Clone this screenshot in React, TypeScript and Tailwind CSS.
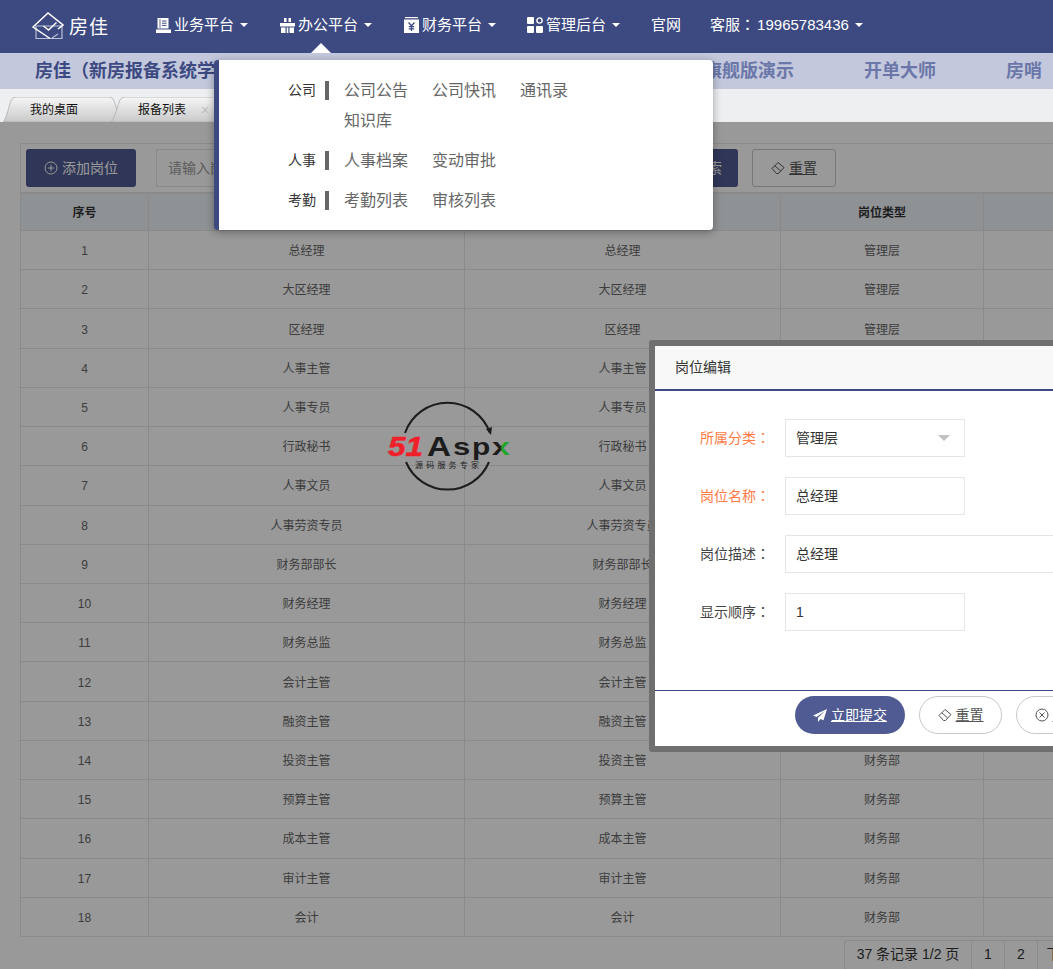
import type { ReactNode } from "react";

const positions = [
  ["总经理", "管理层"], ["大区经理", "管理层"], ["区经理", "管理层"], ["人事主管", "人事部"],
  ["人事专员", "人事部"], ["行政秘书", "人事部"], ["人事文员", "人事部"], ["人事劳资专员", "人事部"],
  ["财务部部长", "财务部"], ["财务经理", "财务部"], ["财务总监", "财务部"], ["会计主管", "财务部"],
  ["融资主管", "财务部"], ["投资主管", "财务部"], ["预算主管", "财务部"], ["成本主管", "财务部"],
  ["审计主管", "财务部"], ["会计", "财务部"],
];

const FONT = "font-['Liberation_Sans','Noto_Sans_CJK_SC',sans-serif]";

function Caret() {
  return <span className="ml-[6px] h-0 w-0 border-x-[4px] border-t-[4px] border-x-transparent border-t-white" />;
}

function NavItem({ icon, label }: { icon: ReactNode; label: string }) {
  return (
    <div className="flex items-center">
      <span className="mr-[3px] flex h-4 w-4 items-center justify-center">{icon}</span>
      <span>{label}</span>
      <Caret />
    </div>
  );
}

function BookIcon() {
  return (
    <svg width="15" height="15" viewBox="0 0 15 15">
      <path d="M1.5 0h11v10.5h-11z" fill="#fff" />
      <path d="M4 1v9" stroke="#3d4a82" strokeWidth="0.8" />
      <path d="M6 3h4.5M6 5.2h4.5M6 7.4h4.5" stroke="#3d4a82" strokeWidth="1" />
      <path d="M0 11.5h15V15H0z" fill="#fff" />
    </svg>
  );
}

function OfficeIcon() {
  return (
    <svg width="15" height="15" viewBox="0 0 15 15" fill="#fff">
      <path d="M4 0h2.5v4H4zM8.5 0H11v4H8.5z" />
      <path d="M0 5h15v3.5H0z" />
      <path d="M1 9.5h4.5V15H1zM9.5 9.5H14V15H9.5zM6.7 9.5h1.6V15H6.7z" />
    </svg>
  );
}

function YenIcon() {
  return (
    <svg width="15" height="16" viewBox="0 0 15 16">
      <path d="M1 0h13v1.2H1z" fill="#fff" />
      <path d="M0 2.5h15V16H0z" fill="#fff" />
      <path d="M4.5 5.5l3 3.2 3-3.2M7.5 8.7V14M4.8 9.6h5.4M4.8 11.8h5.4" stroke="#3d4a82" strokeWidth="1.3" fill="none" />
    </svg>
  );
}

function GridIcon() {
  return (
    <svg width="16" height="16" viewBox="0 0 16 16" fill="#fff">
      <rect x="0" y="0" width="7" height="7" rx="1" />
      <rect x="0" y="9" width="7" height="7" rx="1" />
      <rect x="9" y="9" width="7" height="7" rx="1" />
      <circle cx="12.5" cy="3.5" r="2.6" fill="none" stroke="#fff" strokeWidth="1.4" />
    </svg>
  );
}

function LogoHouse() {
  return (
    <svg width="32" height="28" viewBox="0 0 32 28" fill="none" stroke="#fff" strokeWidth="1.5">
      <path d="M4 14v12.5h26V13M4 14h26" strokeOpacity="0.65" strokeWidth="1.2" />
      <path d="M18 26.5 1 15 16 1l15 12-5 4" />
      <path d="M11.5 14l5 4 8-7.5" />
      <path d="M20 26l6-4" strokeOpacity="0.65" strokeWidth="1.2" />
    </svg>
  );
}

function Eraser() {
  return (
    <svg width="14" height="14" viewBox="0 0 14 14" fill="none" stroke="currentColor" strokeWidth="1">
      <path d="M1 7.5 7 1.5l6 5-5.5 6h-2z" />
      <path d="M3.8 4.8 9.6 10" />
    </svg>
  );
}

function Colon() {
  return <span className="font-['Noto_Sans_CJK_TC',sans-serif]">：</span>;
}

function Tab({ label, close, className }: { label: string; close?: boolean; className: string }) {
  return (
    <div className={`relative flex h-[25px] items-center text-[12px] text-[#111] ${className}`}>
      <svg className="absolute inset-0 h-full w-full" viewBox="0 0 100 25" preserveAspectRatio="none">
        <defs>
          <linearGradient id="tabfill" x1="0" y1="0" x2="0" y2="1">
            <stop offset="0" stopColor="#f6f6f6" />
            <stop offset="1" stopColor="#c9c9c9" />
          </linearGradient>
        </defs>
        <path
          d="M0 25 C3 22 5 8 7 3 Q8 0 11 0 L89 0 Q92 0 93 3 C95 8 97 22 100 25Z"
          fill="url(#tabfill)"
          stroke="#a6a6a6"
          strokeWidth="0.7"
          vectorEffect="non-scaling-stroke"
        />
      </svg>
      <span className="relative pl-[27px]">{label}</span>
      {close && <span className="relative ml-[15px] text-[14px] leading-none text-[#bdbdbd]">×</span>}
    </div>
  );
}

function MenuRow({ title, items }: { title: string; items: string[] }) {
  return (
    <div className="flex">
      <div className="flex h-[30px] w-[110px] items-center justify-end text-[14px] text-[#333]">
        <span>{title}</span>
        <span className="ml-[9px] h-[19px] w-[4px] bg-[#666]" />
      </div>
      <div className="ml-[15px] flex w-[250px] flex-wrap pt-[1px] -mb-[1px] text-[16px] leading-[30px] text-[#666]">
        {items.map((it) => (
          <span key={it} className="mr-[24px]">{it}</span>
        ))}
      </div>
    </div>
  );
}

function FormRow({ label, value, required, wide, select }: { label: string; value: string; required?: boolean; wide?: boolean; select?: boolean }) {
  return (
    <div className="flex items-center pl-[45px]">
      <span className={`w-[70px] text-[14px] whitespace-nowrap ${required ? "text-[#ff7a45]" : "text-[#444]"}`}>
        {label}
        <Colon />
      </span>
      <div className={`ml-[15px] flex h-[38px] items-center justify-between border border-[#e6e6e6] pl-[10px] pr-[14px] text-[14px] text-[#333] ${wide ? "w-[400px]" : "w-[180px]"}`}>
        <span>{value}</span>
        {select && <span className="h-0 w-0 border-x-[6px] border-t-[6px] border-x-transparent border-t-[#c2c2c2]" />}
      </div>
    </div>
  );
}

export default function App() {
  return (
    <div className={`relative h-[969px] w-full overflow-hidden bg-white ${FONT}`}>
      {/* 헤더 */}
      <header className="flex h-[53px] items-center bg-[#3d4a82] text-[15px] text-white">
        <div className="ml-[32px] flex w-[123px] items-center pb-[1px]">
          <LogoHouse />
          <span className="ml-[5px] mt-[5px] text-[19px] tracking-[1px]">房佳</span>
        </div>
        <div className="flex items-center gap-[31px] pb-[3px]">
          <NavItem icon={<BookIcon />} label="业务平台" />
          <NavItem icon={<OfficeIcon />} label="办公平台" />
          <NavItem icon={<YenIcon />} label="财务平台" />
          <NavItem icon={<GridIcon />} label="管理后台" />
          <span>官网</span>
          <div className="-ml-[2px] flex items-center">
            <span>
              客服
              <Colon />
              <span className="ml-[2px]">19965783436</span>
            </span>
            <Caret />
          </div>
        </div>
      </header>

      <div className="flex h-[36px] items-center whitespace-nowrap bg-[#c3c8dd] pl-[35px] text-[18px] font-bold font-['Liberation_Serif','Noto_Sans_CJK_SC',serif] text-[#6b77a8]">
        <span className="w-[599px] text-[#3d4a82]">房佳（新房报备系统学习版）</span>
        <span className="ml-[70px]">旗舰版演示</span>
        <span className="ml-[70px]">开单大师</span>
        <span className="ml-[70px]">房哨</span>
      </div>

      <div className="flex h-[33px] items-end bg-[#eeeff1] pl-[3px]">
        <Tab label="我的桌面" className="w-[119px]" />
        <Tab label="报备列表" close className="-ml-[11px] w-[128px]" />
      </div>

      {/* 콘텐츠 */}
      <main className="ml-[20px] w-[1300px] pt-[21px]">
        <div className="flex h-[50px] items-center border border-[#e6e6e6] pl-[5px]">
          <div className="flex h-[38px] w-[110px] items-center justify-center gap-[4px] rounded-[3px] bg-[#4f5b92] text-[14px] text-white">
            <svg width="14" height="14" viewBox="0 0 14 14" fill="none" stroke="#fff" strokeWidth="1">
              <circle cx="7" cy="7" r="6" />
              <path d="M7 3.8v6.4M3.8 7h6.4" />
            </svg>
            添加岗位
          </div>
          <div className="ml-[20px] flex h-[38px] w-[480px] items-center border border-[#e6e6e6] pl-[11px] text-[14px] text-[#999]">
            请输入岗位名称
          </div>
          <div className="ml-[10px] flex h-[38px] w-[92px] items-center justify-end rounded-[3px] bg-[#4f5b92] pr-[16px] text-[14px] text-white">
            搜索
          </div>
          <div className="ml-[14px] flex h-[38px] w-[84px] items-center justify-center gap-[4px] rounded-[3px] border border-[#c9c9c9] text-[14px] text-[#555]">
            <Eraser />
            <span className="underline">重置</span>
          </div>
        </div>

        <table className="w-[1200px] table-fixed border-collapse text-center text-[12px] text-[#666]">
          <colgroup>
            <col className="w-[128px]" />
            <col className="w-[316px]" />
            <col className="w-[316px]" />
            <col className="w-[203px]" />
            <col />
          </colgroup>
          <thead>
            <tr className="h-[37px] bg-[#eef3f9] font-bold text-[#333]">
              <th className="border border-[#e6e6e6] pt-[2px]">序号</th>
              <th className="border border-[#e6e6e6] pt-[2px]">岗位名称</th>
              <th className="border border-[#e6e6e6] pt-[2px]">岗位描述</th>
              <th className="border border-[#e6e6e6] pt-[2px]">岗位类型</th>
              <th className="border border-[#e6e6e6] pt-[2px]">操作</th>
            </tr>
          </thead>
          <tbody>
            {positions.map(([name, type], i) => (
              <tr key={i} className="h-[39.22px]">
                <td className="border border-[#e6e6e6] pt-[2px]">{i + 1}</td>
                <td className="border border-[#e6e6e6] pt-[2px]">{name}</td>
                <td className="border border-[#e6e6e6] pt-[2px]">{name}</td>
                <td className="border border-[#e6e6e6] pt-[2px]">{type}</td>
                <td className="border border-[#e6e6e6]" />
              </tr>
            ))}
          </tbody>
        </table>

        <div className="ml-[824px] mt-[3px] flex h-[30px] w-[300px] text-[14px] text-[#333]">
          <div className="flex w-[128px] items-center justify-center rounded-l-[3px] border border-[#e6e6e6]">37 条记录 1/2 页</div>
          <div className="flex w-[33px] items-center justify-center border-y border-r border-[#e6e6e6]">1</div>
          <div className="flex w-[33px] items-center justify-center border-y border-r border-[#e6e6e6]">2</div>
          <div className="flex w-[60px] items-center justify-center border-y border-r border-[#e6e6e6]">下一页</div>
        </div>
      </main>

      {/* 遮罩 */}
      <div className="absolute inset-x-0 bottom-0 top-[122px] bg-black/40" />

      {/* 水印 */}
      <svg className="absolute left-[385px] top-[400px]" width="130" height="100" viewBox="0 0 130 100">
        <defs>
          <linearGradient id="xfill" x1="0" y1="0" x2="1" y2="0">
            <stop offset="0.45" stopColor="#1c1c1c" />
            <stop offset="0.55" stopColor="#22a52a" />
          </linearGradient>
        </defs>
        <path d="M20 33A45 45 0 0 1 105 33" fill="none" stroke="#1c1c1c" strokeWidth="2" />
        <path d="M101 29l5 6 1-8z" fill="#1c1c1c" />
        <path d="M104 62A45 45 0 0 1 21 62" fill="none" stroke="#1c1c1c" strokeWidth="2" />
        <text x="3" y="56" fontSize="27" fontWeight="700" fontStyle="italic" fontFamily="Liberation Sans" fill="#f0202a" stroke="#f0202a" strokeWidth="0.5" textLength="35" lengthAdjust="spacingAndGlyphs">51</text>
        <text x="42" y="56" fontSize="27" fontWeight="700" fontFamily="Liberation Sans" fill="#1c1c1c" textLength="24" lengthAdjust="spacingAndGlyphs">A</text>
        <text transform="translate(68 55) scale(1.35 1)" fontSize="23" fontWeight="700" fontFamily="Liberation Sans" fill="#1c1c1c">s</text>
        <text transform="translate(87 55) scale(1.3 1)" fontSize="23" fontWeight="700" fontFamily="Liberation Sans" fill="#1c1c1c">p</text>
        <text transform="translate(107 55) scale(1.4 1)" fontSize="23" fontWeight="700" fontFamily="Liberation Sans" fill="url(#xfill)">x</text>
        <text x="30" y="68" fontSize="8" fontFamily="Noto Sans CJK SC" fill="#1c1c1c" textLength="64">源码服务专家</text>
      </svg>

      {/* 岗位编辑 弹窗 */}
      <div className="absolute left-[649px] top-[340px] w-[596px] rounded-[3px] border-[6px] border-[#6f6f6f] bg-white">
        <div className="flex h-[45px] items-center border-b-2 border-[#3d4a82] bg-[#f8f8f8] pl-[20px] text-[14px] text-[#333]">
          岗位编辑
        </div>
        <div className="flex h-[300px] flex-col gap-[20px] border-b border-[#3d4a82] pt-[28px]">
          <FormRow label="所属分类" value="管理层" required select />
          <FormRow label="岗位名称" value="总经理" required />
          <FormRow label="岗位描述" value="总经理" wide />
          <FormRow label="显示顺序" value="1" />
        </div>
        <div className="flex h-[55px] justify-center gap-[14px] pt-[5px] text-[14px]">
          <div className="flex h-[38px] w-[110px] items-center justify-center gap-[4px] rounded-full bg-[#4f5b92] text-white">
            <svg width="14" height="13" viewBox="0 0 14 13" fill="#fff">
              <path d="M14 0 0 6.5l3.5 1.5L12 2 5 8.8V13l2.5-3 3 1.3z" />
            </svg>
            <span className="underline">立即提交</span>
          </div>
          <div className="flex h-[38px] w-[83px] items-center justify-center gap-[4px] rounded-full border border-[#c9c9c9] text-[#555]">
            <Eraser />
            <span className="underline">重置</span>
          </div>
          <div className="flex h-[38px] w-[83px] items-center justify-center gap-[4px] rounded-full border border-[#c9c9c9] text-[#555]">
            <svg width="14" height="14" viewBox="0 0 14 14" fill="none" stroke="#555" strokeWidth="1">
              <circle cx="7" cy="7" r="6" />
              <path d="M4.5 4.5l5 5M9.5 4.5l-5 5" />
            </svg>
            <span className="underline">关闭</span>
          </div>
        </div>
      </div>

      {/* 下拉菜单 */}
      <div className="absolute left-[311px] top-[43px] h-0 w-0 border-x-[10px] border-b-[10px] border-x-transparent border-b-white" />
      <div className="absolute left-[214px] top-[60px] h-[170px] w-[499px] rounded-[4px] border-l-[5px] border-[#3d4a82] bg-white pt-[15px] shadow-[0_2px_8px_rgba(0,0,0,0.35)]">
        <div className="flex flex-col gap-[10px]">
          <MenuRow title="公司" items={["公司公告", "公司快讯", "通讯录", "知识库"]} />
          <MenuRow title="人事" items={["人事档案", "变动审批"]} />
          <MenuRow title="考勤" items={["考勤列表", "审核列表"]} />
        </div>
      </div>
    </div>
  );
}
